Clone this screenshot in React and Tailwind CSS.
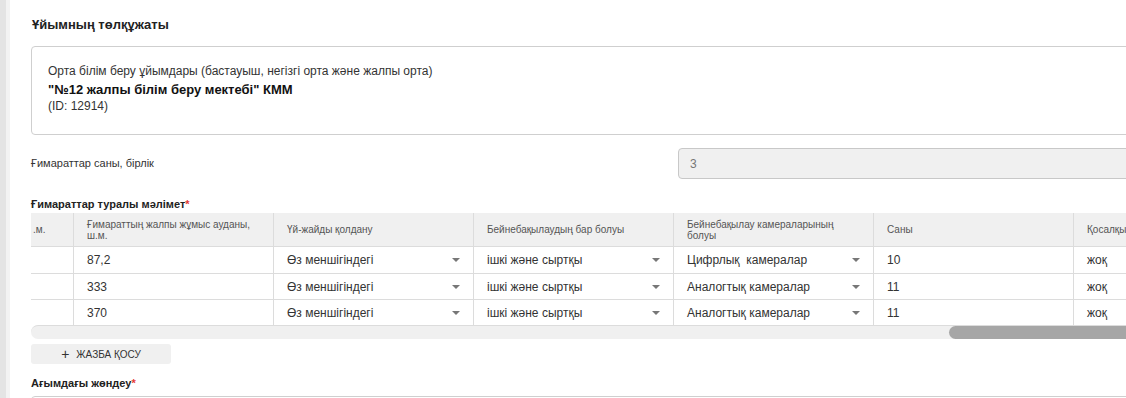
import React from "react";

const Arrow = () => (
  <svg width="8" height="4" viewBox="0 0 8 4" className="shrink-0">
    <path d="M0 0 L8 0 L4 4 Z" fill="#777" />
  </svg>
);

const headers = [
  { t: ".м.", w: "w-[42px]" },
  { t: "Ғимараттың жалпы жұмыс ауданы, ш.м.", w: "w-[200px]" },
  { t: "Үй-жайды қолдану", w: "w-[200px]" },
  { t: "Бейнебақылаудың бар болуы", w: "w-[200px]" },
  { t: "Бейнебақылау камераларының болуы", w: "w-[200px]" },
  { t: "Саны", w: "w-[200px]" },
  { t: "Қосалқы", w: "w-[200px]" },
];

const rows = [
  { h: "h-[27px]", area: "87,2", cam: "Цифрлық  камералар", n: "10" },
  { h: "h-[26px]", area: "333", cam: "Аналогтық камералар", n: "11" },
  { h: "h-[26px]", area: "370", cam: "Аналогтық камералар", n: "11" },
];

function Cell({ w, children, select, first }) {
  return (
    <div
      className={`${w} shrink-0 h-full flex items-center ${first ? "" : "border-l border-[#dcdcdc]"} ${
        select ? "pl-[13px] pr-[13px] justify-between" : "pl-[13px]"
      }`}
    >
      <span className="whitespace-pre">{children}</span>
      {select && <Arrow />}
    </div>
  );
}

export default function App() {
  return (
    <div className="w-[1126px] h-[398px] overflow-hidden bg-white flex font-['Liberation_Sans',Arial,sans-serif] text-[#333]">
      <div className="w-[6px] shrink-0 bg-[#e4e4e4]" />
      <div className="w-[4px] shrink-0 bg-[#f3f3f3]" />
      <div className="flex-1 min-w-0 pl-[21px] pt-[17px]">
        <div className="text-[13px] font-bold text-[#222] leading-[16px] pl-[1px]">Ұйымның төлқұжаты</div>

        <div className="mt-[13px] w-[1120px] h-[89px] border border-[#cfcfcf] rounded-[4px] pl-[16px] pt-[17px]">
          <div className="text-[12px] leading-[15px] text-[#333]">
            Орта білім беру ұйымдары (бастауыш, негізгі орта және жалпы орта)
          </div>
          <div className="text-[13px] font-bold leading-[18px] mt-[2px] text-[#111]">
            "№12 жалпы білім беру мектебі" КММ
          </div>
          <div className="text-[12px] leading-[15px] text-[#333]">(ID: 12914)</div>
        </div>

        <div className="mt-[13px] flex items-center h-[31px]">
          <div className="w-[647px] shrink-0 text-[11px] text-[#333]">Ғимараттар саны, бірлік</div>
          <div className="w-[500px] shrink-0 h-[31px] bg-[#f0f0f0] border border-[#c8c8c8] rounded-[4px] flex items-center pl-[11px] text-[12px] text-[#777]">
            3
          </div>
        </div>

        <div className="mt-[18px] text-[11px] font-bold leading-[14px] text-[#222]">
          Ғимараттар туралы мәлімет<span className="text-[#e53935]">*</span>
        </div>

        <div className="mt-[2px] w-[1095px] overflow-hidden">
          <div className="w-[1300px]">
            <div className="flex h-[33px] bg-[#f0f0f0] text-[10px] leading-[11px] text-[#555]">
              {headers.map((h, i) => (
                <div
                  key={i}
                  className={`${h.w} shrink-0 h-full flex items-center ${i === 0 ? "pl-[2px]" : "pl-[13px] pr-[10px] border-l border-[#dcdcdc]"}`}
                >
                  <span className="whitespace-normal">{h.t}</span>
                </div>
              ))}
            </div>
            {rows.map((r, i) => (
              <div key={i} className={`flex ${r.h} border-t border-[#dcdcdc] text-[12px] text-[#333]`}>
                <Cell w="w-[42px]" first>{""}</Cell>
                <Cell w="w-[200px]">{r.area}</Cell>
                <Cell w="w-[200px]" select>Өз меншігіндегі</Cell>
                <Cell w="w-[200px]" select>ішкі және сыртқы</Cell>
                <Cell w="w-[200px]" select>{r.cam}</Cell>
                <Cell w="w-[200px]">{r.n}</Cell>
                <Cell w="w-[200px]">жоқ</Cell>
              </div>
            ))}
          </div>
          <div className="h-[14px] bg-[#f0f0f0] rounded-l-[7px] border-t border-[#dcdcdc] flex">
            <div className="w-[918px] shrink-0" />
            <div className="flex-1 bg-[#a6a6a6] rounded-l-full" />
          </div>
        </div>

        <button className="mt-[5px] w-[140px] h-[20px] bg-[#f0f0f0] rounded-[3px] flex items-center justify-center gap-[7px] text-[10px] text-[#333] uppercase">
          <span className="text-[14px] leading-[14px] font-light">+</span>
          <span>ЖАЗБА ҚОСУ</span>
        </button>

        <div className="mt-[12px] text-[11px] font-bold leading-[14px] text-[#222]">
          Ағымдағы жөндеу<span className="text-[#e53935]">*</span>
        </div>
        <div className="mt-[6px] w-[1110px] h-[30px] border border-[#cfcfcf] rounded-[4px]" />
      </div>
    </div>
  );
}
